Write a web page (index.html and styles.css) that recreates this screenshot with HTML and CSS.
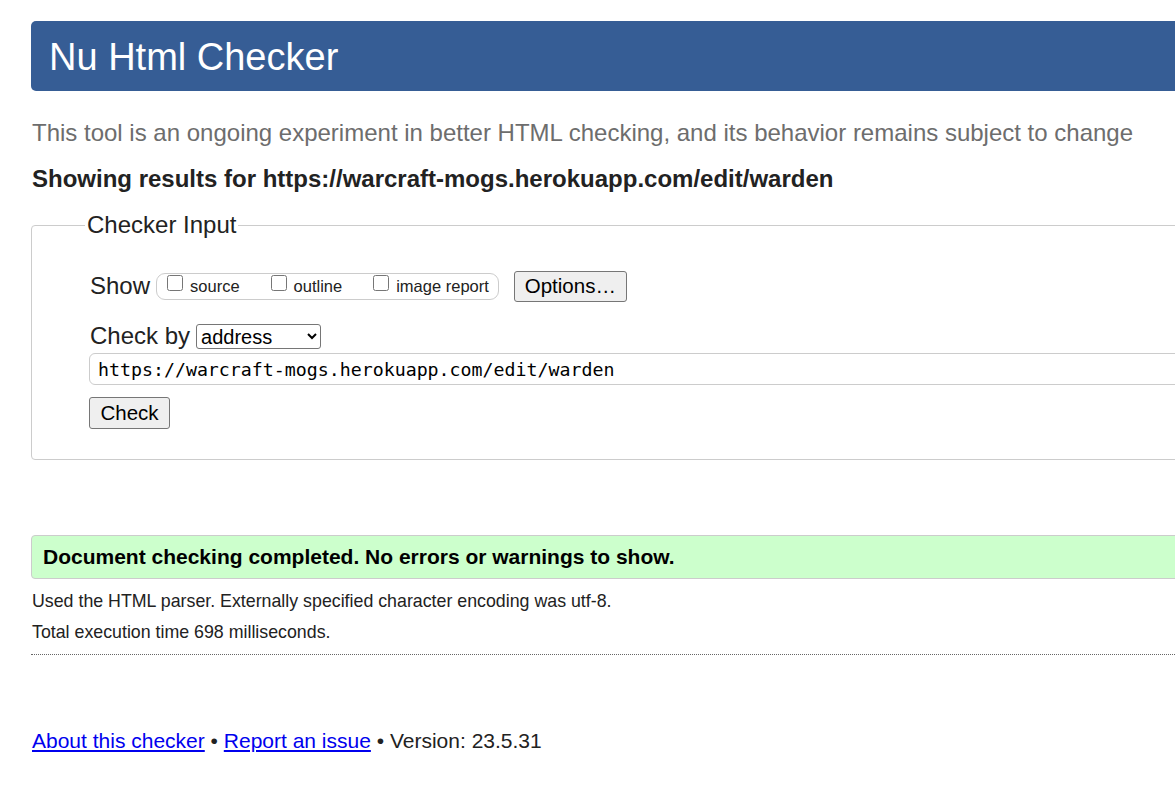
FILE: index.html
```html
<!DOCTYPE html>
<html lang="en">
<head>
<meta charset="utf-8">
<title>Nu Html Checker</title>
<link rel="stylesheet" href="styles.css">
</head>
<body>
<div class="page">
  <h1 class="title">Nu Html Checker</h1>
  <p class="about">This tool is an ongoing experiment in better HTML checking, and its behavior remains subject to change</p>
  <p class="showing">Showing results for https://warcraft-mogs.herokuapp.com/edit/warden</p>
  <form class="form">
    <fieldset class="inputs">
      <legend class="legend">Checker Input</legend>
      <div class="row show-row">
        <span class="row-label">Show</span>
        <span class="opts">
          <label class="opt"><input type="checkbox" class="cb">source</label>
          <label class="opt"><input type="checkbox" class="cb">outline</label>
          <label class="opt"><input type="checkbox" class="cb">image report</label>
        </span>
        <button type="button" class="btn btn-options">Options…</button>
      </div>
      <div class="row by-row">
        <span class="row-label">Check by</span>
        <select class="select"><option>address</option></select>
      </div>
      <input class="url" type="text" value="https://warcraft-mogs.herokuapp.com/edit/warden">
      <button type="button" class="btn btn-check">Check</button>
    </fieldset>
  </form>
  <p class="success">Document checking completed. No errors or warnings to show.</p>
  <p class="details">Used the HTML parser. Externally specified character encoding was utf-8.</p>
  <p class="details">Total execution time 698 milliseconds.</p>
  <hr class="sep">
  <p class="footer"><a href="#" class="link">About this checker</a> • <a href="#" class="link">Report an issue</a> • Version: 23.5.31</p>
</div>
</body>
</html>
```

FILE: styles.css
```css
html, body {
  margin: 0;
  padding: 0;
  overflow: hidden;
  background: #fff;
}
body {
  font-family: "Liberation Sans", Arial, sans-serif;
  color: #222;
}
.page {
  width: 1400px;
  padding: 21px 0 0 31px;
}
.title {
  margin: 0;
  height: 70px;
  line-height: 72px;
  background: #365d95;
  color: #fff;
  font-weight: normal;
  font-size: 38px;
  padding-left: 18px;
  border-radius: 5px;
}
.about {
  margin: 28px 0 0 1px;
  font-size: 24px;
  line-height: 28px;
  color: #6d6d6d;
}
.showing {
  margin: 18px 0 0 1px;
  font-size: 24px;
  line-height: 28px;
  font-weight: bold;
  color: #222;
}
.form {
  margin: 18px 0 0 0;
}
.inputs {
  margin: 0;
  border: 1px solid #ccc;
  border-radius: 4px;
  padding: 30px 0 30px 57px;
}
.legend {
  font-size: 24px;
  line-height: 28px;
  padding: 0 2px;
  margin-left: -4px;
  color: #222;
}
.row {
  display: flex;
  align-items: center;
}
.row-label {
  font-size: 24px;
  margin-left: 1px;
}
.show-row {
  height: 34px;
}
.opts {
  display: flex;
  align-items: flex-start;
  margin-left: 6px;
  height: 25px;
  border: 1px solid #ccc;
  border-radius: 9px;
  padding: 0 9px 0 10px;
}
.opt {
  display: flex;
  align-items: flex-start;
  font-size: 16.5px;
  line-height: 25px;
  height: 25px;
  margin-right: 31px;
  color: #222;
}
.opt:last-child {
  margin-right: 0;
}
.cb {
  width: 16px;
  height: 16px;
  margin: 1px 7px 0 0;
}
.btn {
  font-family: "Liberation Sans", Arial, sans-serif;
  font-size: 20.5px;
  background: #efefef;
  border: 1px solid #767676;
  border-radius: 3px;
  color: #000;
  padding: 0;
}
.btn-options {
  margin-left: 15px;
  width: 113px;
  height: 31px;
}
.by-row {
  margin-top: 16px;
  height: 34px;
}
.select {
  margin-left: 6px;
  width: 125px;
  height: 25px;
  font-family: "Liberation Sans", Arial, sans-serif;
  font-size: 20px;
  border: 1px solid #767676;
  border-radius: 3px;
  background: #fff;
  color: #000;
}
.url {
  display: block;
  box-sizing: border-box;
  margin: 0;
  width: 1300px;
  height: 32px;
  border: 1px solid #ccc;
  border-radius: 6px;
  padding: 0 8px;
  font-family: "DejaVu Sans Mono", "Liberation Mono", monospace;
  font-size: 18.25px;
  color: #000;
}
.btn-check {
  display: block;
  margin-top: 12px;
  width: 81px;
  height: 32px;
}
.success {
  margin: 75px 0 0 0;
  height: 42px;
  line-height: 42px;
  background: #ccffcc;
  border: 1px solid #ccc;
  border-radius: 4px;
  padding-left: 11px;
  font-size: 21px;
  font-weight: bold;
  color: #000;
}
.details {
  margin: 12px 0 0 1px;
  font-size: 17.8px;
  line-height: 20px;
  color: #222;
}
.details + .details {
  margin-top: 11px;
}
.sep {
  margin: 12px 0 0 0;
  border: 0;
  border-top: 1px dotted #666;
  height: 0;
}
.footer {
  margin: 74px 0 0 1px;
  font-size: 21px;
  line-height: 24px;
  color: #222;
}
.link {
  color: #0000ee;
  text-decoration: underline;
}
```
